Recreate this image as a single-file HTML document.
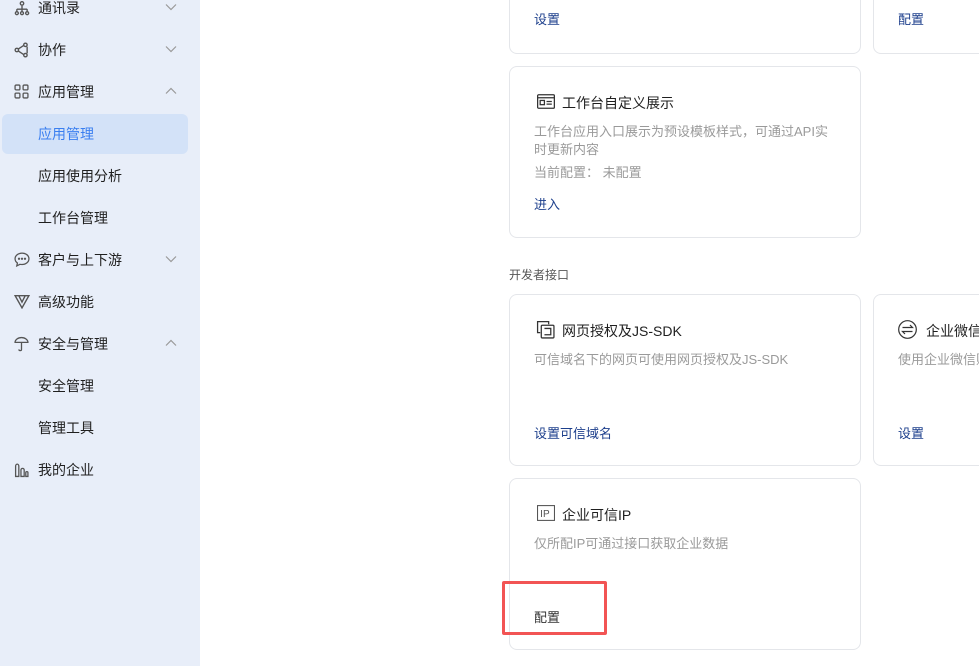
<!DOCTYPE html><html><head><meta charset="utf-8"><style>
*{margin:0;padding:0;box-sizing:border-box}
body{width:979px;height:666px;overflow:hidden;background:#fff;font-family:"Liberation Sans","Noto Sans CJK SC",sans-serif;position:relative}
.side{position:absolute;left:0;top:0;width:200px;height:666px;background:#e8eef9}
.it{position:absolute;left:0;width:200px;height:40px;font-size:14px;color:#1f1f1f;line-height:40px}
.it .t{position:absolute;left:38px}
.it svg.ic{position:absolute;left:14px;top:12px}
.it .ch{position:absolute;left:165px;top:15px}
.sel{position:absolute;left:2px;top:114px;width:186px;height:40px;background:#d3e2f8;border-radius:6px}
.card{position:absolute;border:1px solid #e4e6ea;border-radius:8px;background:#fff}
.ttl{position:absolute;left:52px;font-size:14px;color:#1f1f1f}
.ds{position:absolute;left:24px;font-size:13px;color:#9a9a9a;line-height:18px}
.lk{position:absolute;left:24px;font-size:13px;color:#1d3f8c}
</style></head><body>
<div class="side">
<div class="sel"></div>
<div class="it" style="top:-12px"><svg class="ic" width="16" height="16" viewBox="0 0 14 14" fill="none" stroke="#555" stroke-width="1.2"><circle cx="7" cy="3" r="1.5"/><path d="M7 5v3M2.5 8h9M2.5 8v2M11.5 8v2M7 8v2"/><circle cx="2.5" cy="11.5" r="1.3"/><circle cx="7" cy="11.5" r="1.3"/><circle cx="11.5" cy="11.5" r="1.3"/></svg><span class="t">通讯录</span><svg class="ch" width="12" height="8" viewBox="0 0 12 8" fill="none" stroke="#999" stroke-width="1.2"><path d="M1 1.5l5 5 5-5"/></svg></div>
<div class="it" style="top:30px"><svg class="ic" width="16" height="16" viewBox="0 0 14 14" fill="none" stroke="#555" stroke-width="1.2"><circle cx="2.5" cy="7" r="1.5"/><circle cx="10" cy="2.5" r="1.5"/><circle cx="10" cy="11.5" r="1.5"/><path d="M4 6L8.5 3M4 8l4.5 3M11.5 4v6"/></svg><span class="t">协作</span><svg class="ch" width="12" height="8" viewBox="0 0 12 8" fill="none" stroke="#999" stroke-width="1.2"><path d="M1 1.5l5 5 5-5"/></svg></div>
<div class="it" style="top:72px"><svg class="ic" width="15" height="15" viewBox="0 0 14 14" fill="none" stroke="#555" stroke-width="1.2"><rect x="1" y="1" width="4.5" height="4.5" rx="1"/><rect x="8.5" y="1" width="4.5" height="4.5" rx="1"/><rect x="1" y="8.5" width="4.5" height="4.5" rx="1"/><rect x="8.5" y="8.5" width="4.5" height="4.5" rx="1"/></svg><span class="t">应用管理</span><svg class="ch" width="12" height="8" viewBox="0 0 12 8" fill="none" stroke="#999" stroke-width="1.2"><path d="M1 6.5l5-5 5 5"/></svg></div>
<div class="it" style="top:114px;color:#3a7ff0"><span class="t">应用管理</span></div>
<div class="it" style="top:156px"><span class="t">应用使用分析</span></div>
<div class="it" style="top:198px"><span class="t">工作台管理</span></div>
<div class="it" style="top:240px"><svg class="ic" width="16" height="15" viewBox="0 0 15 14" fill="none" stroke="#555" stroke-width="1.2"><path d="M7.5 1C4 1 1 3.3 1 6.3c0 1.6.8 3 2.2 4L2.6 13l3-1.5c.6.2 1.2.2 1.9.2 3.5 0 6.5-2.3 6.5-5.4S11 1 7.5 1z"/><circle cx="4.7" cy="6.3" r=".5"/><circle cx="7.5" cy="6.3" r=".5"/><circle cx="10.3" cy="6.3" r=".5"/></svg><span class="t">客户与上下游</span><svg class="ch" width="12" height="8" viewBox="0 0 12 8" fill="none" stroke="#999" stroke-width="1.2"><path d="M1 1.5l5 5 5-5"/></svg></div>
<div class="it" style="top:282px"><svg class="ic" width="16" height="15" viewBox="0 0 15 14" fill="none" stroke="#555" stroke-width="1.3"><path d="M1 1.5h13L7.5 13z M4.5 1.5l3 6 3-6"/></svg><span class="t">高级功能</span></div>
<div class="it" style="top:324px"><svg class="ic" width="15" height="16" viewBox="0 0 14 14" fill="none" stroke="#555" stroke-width="1.2"><path d="M1 5.5C1 3 3.7 1 7 1s6 2 6 4.5zM7 5.5v6.5c0 .8-.5 1.2-1.2 1.2S4.6 12.8 4.6 12"/></svg><span class="t">安全与管理</span><svg class="ch" width="12" height="8" viewBox="0 0 12 8" fill="none" stroke="#999" stroke-width="1.2"><path d="M1 6.5l5-5 5 5"/></svg></div>
<div class="it" style="top:366px"><span class="t">安全管理</span></div>
<div class="it" style="top:408px"><span class="t">管理工具</span></div>
<div class="it" style="top:450px"><svg class="ic" width="15" height="16" viewBox="0 0 14 14" fill="none" stroke="#555" stroke-width="1.2"><path d="M1.5 13V3.5c0-1 .7-2 1.5-2s1.5 1 1.5 2V13zM6.5 13V7c0-.8.6-1.5 1.5-1.5S9.5 6.2 9.5 7v6zM11 13V9.5c0-.6.5-1 1-1s1 .4 1 1V13z"/></svg><span class="t">我的企业</span></div>
</div>

<div class="card" style="left:509px;top:-20px;width:352px;height:74px"><div class="lk" style="top:28px">设置</div></div>
<div class="card" style="left:873px;top:-20px;width:120px;height:74px"><div class="lk" style="top:28px">配置</div></div>

<div class="card" style="left:509px;top:66px;width:352px;height:172px">
<svg style="position:absolute;left:27px;top:27px" width="18" height="15" viewBox="0 0 17 14" fill="none" stroke="#333" stroke-width="1.2"><rect x=".6" y=".6" width="15.8" height="12.8" rx="1"/><path d="M.5 3.5h16"/><rect x="3" y="6" width="4" height="4"/><path d="M9 7h5M9 9.5h5"/></svg>
<div class="ttl" style="top:26px">工作台自定义展示</div>
<div class="ds" style="top:56px;width:300px">工作台应用入口展示为预设模板样式，可通过API实时更新内容</div>
<div class="ds" style="top:97px">当前配置：&nbsp;未配置</div>
<div class="lk" style="top:127px">进入</div></div>

<div style="position:absolute;left:509px;top:266px;font-size:12px;color:#555">开发者接口</div>

<div class="card" style="left:509px;top:294px;width:352px;height:172px">
<svg style="position:absolute;left:26px;top:25px" width="19" height="19" viewBox="0 0 18 18" fill="none" stroke="#333" stroke-width="1.2"><path d="M4 12H1.5V1.5H12V4"/><rect x="5" y="5" width="12" height="12" rx="1"/><path d="M8 8h6v6H8"/></svg>
<div class="ttl" style="top:26px">网页授权及JS-SDK</div>
<div class="ds" style="top:56px">可信域名下的网页可使用网页授权及JS-SDK</div>
<div class="lk" style="top:128px">设置可信域名</div></div>

<div class="card" style="left:873px;top:294px;width:120px;height:172px">
<svg style="position:absolute;left:24px;top:25px" width="19" height="19" viewBox="0 0 19 19" fill="none" stroke="#333" stroke-width="1.2"><circle cx="9.5" cy="9.5" r="8.8"/><path d="M4.5 7.5h10L12 5M14.5 11.5h-10L7 14"/></svg>
<div class="ttl" style="top:26px">企业微信</div>
<div class="ds" style="top:56px">使用企业微信账</div>
<div class="lk" style="top:128px">设置</div></div>

<div class="card" style="left:509px;top:478px;width:352px;height:172px">
<svg style="position:absolute;left:27px;top:26px" width="18" height="16" viewBox="0 0 17 15"><rect x=".5" y=".5" width="16" height="14" fill="none" stroke="#555"/><text x="3" y="11.5" font-size="9.5" font-family="Liberation Sans" fill="#555">IP</text></svg>
<div class="ttl" style="top:26px">企业可信IP</div>
<div class="ds" style="top:56px">仅所配IP可通过接口获取企业数据</div>
<div class="lk" style="top:128px;color:#333">配置</div></div>

<div style="position:absolute;left:502px;top:581px;width:105px;height:54px;border:3px solid #f25454;border-radius:2px"></div>
</body></html>
